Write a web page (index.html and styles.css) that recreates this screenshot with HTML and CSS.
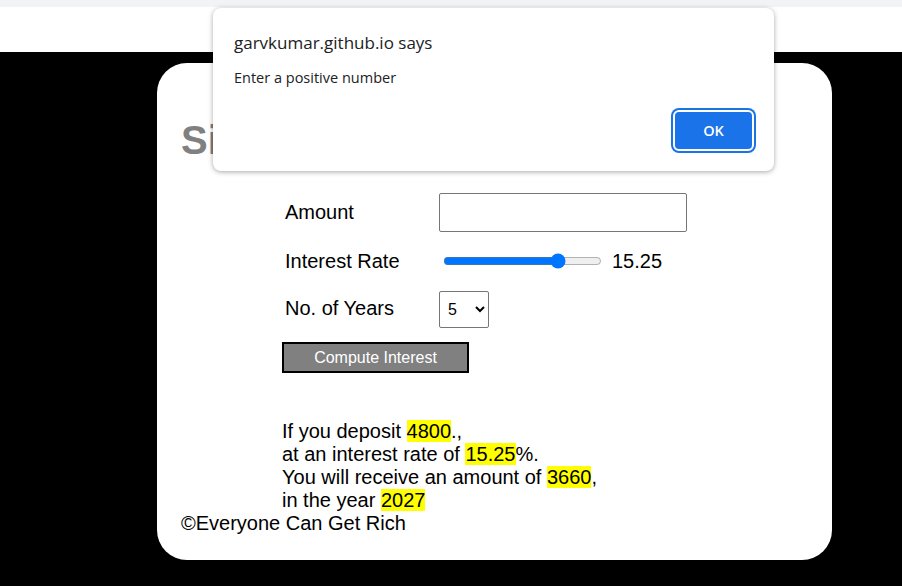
FILE: index.html
```html
<!DOCTYPE html>
<html>
<head>
<meta charset="utf-8">
<link rel="stylesheet" href="styles.css">
</head>
<body>
<div class="chrome-strip"></div>
<div class="topband"></div>
<main class="stage">
  <section class="card">
    <h1 class="title">Simple Interest</h1>
    <div class="form">
      <label class="lbl">Amount</label>
      <div class="ctl"><input class="amount" type="text"></div>
      <label class="lbl">Interest Rate</label>
      <div class="ctl"><input class="rate" type="range" min="1" max="20" step="0.25" value="15.25"><span class="rateval">15.25</span></div>
      <label class="lbl">No. of Years</label>
      <div class="ctl"><select class="years"><option>5</option></select></div>
    </div>
    <button class="compute">Compute Interest</button>
    <p class="result">If you deposit <mark>4800</mark>.,<br>at an interest rate of <mark>15.25</mark>%.<br>You will receive an amount of <mark>3660</mark>,<br>in the year <mark>2027</mark></p>
    <p class="footer">©Everyone Can Get Rich</p>
  </section>
</main>
<div class="dialog">
  <div class="dlg-title">garvkumar.github.io says</div>
  <div class="dlg-msg">Enter a positive number</div>
  <div class="dlg-actions"><button class="ok">OK</button></div>
</div>
</body>
</html>
```
FILE: styles.css
```css
html, body { margin: 0; padding: 0; }
body { width: 902px; height: 586px; overflow: hidden; background: #000; font-family: "Liberation Sans", Arial, sans-serif; }
.chrome-strip { height: 7px; background: #f1f3f4; }
.topband { height: 45px; background: #fff; }
.stage { padding: 11px 0 0 157px; }
.card { width: 675px; height: 497px; background: #fff; border-radius: 30px; box-sizing: border-box; padding: 54px 0 0 24px; }
.title { margin: 0; font-size: 40px; line-height: 46px; font-weight: bold; color: #808080; height: 46px; }
.form { margin: 30px 0 0 101px; display: grid; grid-template-columns: 157px auto; grid-template-rows: 39px 38px 37px; row-gap: 10px; align-items: center; }
.lbl { font-size: 20px; padding-left: 3px; color: #000; }
.ctl { display: flex; align-items: center; }
.amount { width: 248px; height: 39px; box-sizing: border-box; border: 1px solid #767676; border-radius: 2px; padding: 0 4px; font-size: 16px; }
.rate { width: 159px; margin: 0 0 0 4px; accent-color: #0075ff; }
.rateval { font-size: 20px; margin-left: 10px; }
.years { width: 50px; height: 37px; margin-top: 1px; font-size: 16px; font-family: "Liberation Sans", Arial, sans-serif; border: 1px solid #767676; border-radius: 2px; background: #fff; color: #000; padding-left: 4px; }
.compute { margin: 15px 0 0 101px; width: 187px; height: 31px; background: #808080; color: #fff; border: 2px solid #000; font-size: 16px; font-family: "Liberation Sans", Arial, sans-serif; padding: 0; display: block; }
.result { margin: 47px 0 0 101px; font-size: 20px; line-height: 23px; color: #000; }
.result mark { background: #ffff00; color: #000; }
.footer { margin: 0; font-size: 20px; line-height: 23px; color: #000; }
.dialog { position: absolute; left: 213px; top: 8px; width: 561px; height: 163px; box-sizing: border-box; background: #fff; border-radius: 8px; box-shadow: 0 1px 5px rgba(0,0,0,0.35); padding: 24px 20px 0 21px; font-family: "Open Sans", "Noto Sans", sans-serif; color: #202124; }
.dlg-title { font-size: 17px; line-height: 22px; }
.dlg-msg { font-size: 14.5px; line-height: 20px; margin-top: 14px; }
.dlg-actions { display: flex; justify-content: flex-end; margin-top: 22px; }
.ok { width: 81px; height: 41px; background: #1a73e8; color: #fff; border: 2px solid #fff; border-radius: 6px; box-shadow: 0 0 0 2px #1a73e8; font-family: "Open Sans", sans-serif; font-weight: 600; font-size: 14.5px; }
```
